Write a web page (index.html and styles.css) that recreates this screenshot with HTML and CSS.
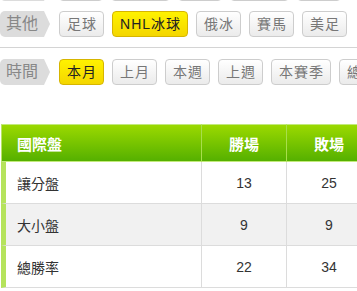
FILE: index.html
```html
<!DOCTYPE html>
<html lang="zh-Hant">

<head>
    <meta charset="UTF-8">
    <meta name="viewport" content="width=device-width, initial-scale=1.0">
    <title>國際盤戰績</title>
    <link rel="stylesheet" href="styles.css">
</head>

<body>
    <div class="filters">
        <!-- only the bottom edge of this row is in view -->
        <div class="filter-row top-cut">
            <span class="filter-label filter-label--blank"></span>
            <span class="chip chip--w2"></span>
            <span class="chip chip--w3"></span>
            <span class="chip chip--w2"></span>
            <span class="chip chip--w3"></span>
            <span class="chip chip--w2"></span>
        </div>
        <div class="filter-row has-line">
            <span class="filter-label">其他</span>
            <span class="chip">足球</span>
            <span class="chip is-on">NHL冰球</span>
            <span class="chip">俄冰</span>
            <span class="chip">賽馬</span>
            <span class="chip">美足</span>
        </div>
        <div class="filter-row">
            <span class="filter-label">時間</span>
            <span class="chip is-on">本月</span>
            <span class="chip">上月</span>
            <span class="chip">本週</span>
            <span class="chip">上週</span>
            <span class="chip">本賽季</span>
            <span class="chip">總計</span>
        </div>
    </div>

    <div class="board">
        <table class="stats">
            <colgroup>
                <col class="col-name">
                <col class="col-num">
                <col class="col-num">
            </colgroup>
            <thead>
                <tr>
                    <th>國際盤</th>
                    <th>勝場</th>
                    <th>敗場</th>
                </tr>
            </thead>
            <tbody>
                <tr>
                    <td>讓分盤</td>
                    <td>13</td>
                    <td>25</td>
                </tr>
                <tr class="alt">
                    <td>大小盤</td>
                    <td>9</td>
                    <td>9</td>
                </tr>
                <tr>
                    <td>總勝率</td>
                    <td>22</td>
                    <td>34</td>
                </tr>
            </tbody>
        </table>
    </div>
</body>

</html>
```

FILE: styles.css
```css
* {
    margin: 0;
    padding: 0;
    box-sizing: border-box;
}

body {
    font-family: 'Liberation Sans', 'Noto Sans CJK TC', sans-serif;
    background: #fff;
    color: #333;
    overflow: hidden;
}

.filters {
    overflow: hidden;
}

.filter-row {
    display: flex;
    align-items: center;
    padding: 11px 0 10px;
    white-space: nowrap;
}

.filter-row.top-cut {
    padding: 0;
    margin-top: -25px;
}

.top-cut + .filter-row {
    padding-top: 10px;
}

.filter-row.has-line {
    border-bottom: 1px solid #d4d4d4;
}

.filter-label {
    position: relative;
    flex: none;
    height: 26px;
    line-height: 26px;
    padding: 0 6px;
    margin-right: 15px;
    background: #dcdcdc;
    color: #888;
    font-size: 16px;
    border-radius: 5px 0 0 5px;
}

.filter-label--blank {
    width: 44px;
}

.filter-label::after {
    content: "";
    position: absolute;
    left: 100%;
    top: 0;
    border-left: 6px solid #dcdcdc;
    border-top: 13px solid transparent;
    border-bottom: 13px solid transparent;
}

.chip {
    flex: none;
    height: 26px;
    line-height: 24px;
    padding: 0 6px 0 7px;
    margin-right: 8px;
    border: 1px solid #cdcdcd;
    border-radius: 4px;
    background: linear-gradient(#fff, #ebebeb);
    color: #777;
    font-size: 14px;
    letter-spacing: 1px;
}

.chip--w2 {
    width: 44px;
}

.chip--w3 {
    width: 59px;
}

.chip.is-on {
    background: linear-gradient(#fff200, #f4d600);
    border-color: #d6b500;
    color: #222;
}

.board {
    margin-top: 29px;
    padding-left: 1px;
}

.stats {
    width: 370px;
    table-layout: fixed;
    border-collapse: separate;
    border-spacing: 0;
    font-size: 14px;
}

.stats .col-name {
    width: 200px;
}

.stats .col-num {
    width: 85px;
}

.stats th {
    height: 38px;
    background: linear-gradient(#9bd900, #55b000);
    color: #fff;
    font-size: 15px;
    font-weight: bold;
    text-align: center;
    border-top: 1px solid #c2ea7c;
    border-bottom: 1px solid #c2ea7c;
    border-left: 1px solid #a8de4c;
}

.stats th:first-child {
    text-align: left;
    padding-left: 15px;
    border-left-color: #b8e466;
}

.stats td {
    height: 42px;
    text-align: center;
    color: #333;
    border-bottom: 1px solid #dcdcdc;
    border-left: 1px solid #dcdcdc;
}

.stats td:first-child {
    text-align: left;
    padding-left: 11px;
    border-left: 5px solid #b5e35c;
}

.stats tr.alt td {
    background: #f1f1f1;
}
```
